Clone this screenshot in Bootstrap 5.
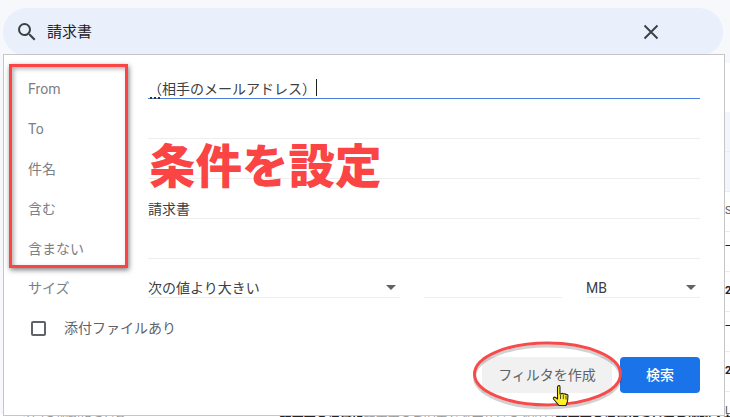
<!DOCTYPE html>
<html lang="ja">
<head>
  <meta charset="UTF-8">
  <meta name="viewport" content="width=device-width, initial-scale=1">
  <title>検索フィルタ</title>
  <link href="https://cdn.jsdelivr.net/npm/bootstrap@5.3.3/dist/css/bootstrap.min.css" rel="stylesheet">
  <style>
    html, body { height: 417px; overflow: hidden; }
    body {
      background-color: #f6f8fc;
      font-family: "Roboto", "Noto Sans CJK JP", sans-serif;
      font-size: 14px;
      color: #5f6368;
      position: relative;
    }
    .search-top { padding: 8px 7px 0 3px; }
    .search-pill {
      height: 48px;
      padding: 0 64px 0 12px;
      background-color: #e9f0fb;
      border-radius: 24px;
      font-size: 15px;
      color: #202124;
    }
    .filter-panel {
      position: absolute;
      left: 3px; top: 54px;
      width: 722px; height: 362px;
      background-color: #fff;
      border: 1px solid #c6c6c6;
      padding: 4.7px 24px 0 24px;
    }
    .form-line { height: 39.8px; }
    .form-label-col { width: 120px; flex-shrink: 0; color: #7b8085; line-height: 20px; }
    .form-field {
      height: 39.8px;
      border-bottom: 1px solid #eeeeee;
      color: #3c4043;
      line-height: 18px;
      position: relative;
    }
    .form-field.active-field { border-bottom-color: #4a80d9; }
    .caret-bar { width: 1px; height: 17px; background-color: #202124; margin-bottom: 2px; }
    .ime-dots { position: absolute; left: 2px; bottom: -1px; width: 10px; border-bottom: 2px dotted #333; }
    .size-arrow { width: 0; height: 0; border-left: 5px solid transparent; border-right: 5px solid transparent; border-top: 5px solid #5f6368; margin-right: 4px; margin-bottom: 7px; }
    .size-number { width: 138px; }
    .size-unit { width: 114px; }
    .tick-box { width: 15px; height: 15px; border: 2px solid #5f6368; border-radius: 2px; }
    .filter-check { margin: 20px 0 0 3px; gap: 18px; }
    .filter-actions { margin-top: 18px; gap: 8px; }
    .btn-make-filter, .btn-make-filter:hover {
      width: 130px; height: 36px; padding: 0;
      background-color: #f1f1f1; border: 0; border-radius: 0;
      color: #5f6368; font-size: 14px;
    }
    .btn-run-search, .btn-run-search:hover {
      width: 80px; height: 36px; padding: 0;
      background-color: #1a73e8; border: 0; border-radius: 4px;
      color: #fff; font-size: 14px; font-weight: 500;
    }
    .red-frame {
      position: absolute;
      left: 9px; top: 64px;
      width: 119px; height: 204px;
      border: 3px solid #fb4444;
      box-shadow: 1px 2px 5px rgba(0,0,0,.5), inset 2px 2px 4px rgba(0,0,0,.3);
    }
    .red-title {
      position: absolute;
      left: 149px; top: 135px;
      font-family: "Noto Sans CJK JP", sans-serif;
      font-size: 46.5px; font-weight: 900; line-height: 56px;
      color: #fb4444;
      white-space: nowrap;
    }
    .red-ellipse { position: absolute; left: 470px; top: 339px; }
    .hand-cursor { position: absolute; left: 552px; top: 384px; }
    .edge-strip {
      position: absolute; left: 725px; top: 63px; width: 5px; height: 354px;
      background-color: #fff; overflow: hidden;
    }
    .edge-top { height: 49px; }
    .edge-cell {
      height: 40px; border-bottom: 1px solid #ececec; padding-top: 12px;
      font-size: 11px; line-height: 14px; color: #555; white-space: nowrap;
    }
    .edge-cell.first-cell { background-color: #f2f6fc; }
    .edge-cell.raised-cell { padding-top: 8px; color: #222; }
    .edge-cell.strong-cell { color: #222; font-weight: 700; }
    .under-strip {
      position: absolute; left: 0; top: 414px; width: 100%; height: 3px;
      overflow: hidden; background-color: #fff; padding-left: 20px;
      font-size: 12px; line-height: 14px; color: #999; white-space: nowrap;
    }
    .under-strip b { color: #222; }
    .under-strip .under-gap { display: inline-block; width: 152px; }
  </style>
</head>
<body>

  <div class="search-top">
    <div class="search-pill d-flex align-items-center justify-content-between">
      <div class="d-flex align-items-center">
        <svg width="24" height="24" viewBox="0 0 24 24" fill="#3c4043"><path d="M15.5 14h-.79l-.28-.27A6.47 6.47 0 0 0 16 9.5 6.5 6.5 0 1 0 9.5 16c1.61 0 3.09-.59 4.23-1.57l.27.28v.79l5 4.99L20.49 19l-4.99-5zm-6 0C7.01 14 5 11.99 5 9.5S7.01 5 9.5 5 14 7.01 14 9.5 11.99 14 9.5 14z"/></svg>
        <span class="ms-2">請求書</span>
      </div>
      <svg width="16" height="16" viewBox="0 0 16 16" fill="none" stroke="#3c4043" stroke-width="1.9"><path d="M1.5 1.5l13 13M14.5 1.5l-13 13"/></svg>
    </div>
  </div>

  <!-- right edge of the table behind the panel -->
  <div class="edge-strip">
    <div class="edge-top"></div>
    <div class="edge-cell first-cell"></div>
    <div class="edge-cell first-cell"></div>
    <div class="edge-cell">Si</div>
    <div class="edge-cell raised-cell">一</div>
    <div class="edge-cell strong-cell">2</div>
    <div class="edge-cell raised-cell">一</div>
    <div class="edge-cell strong-cell">2</div>
    <div class="edge-cell">L</div>
  </div>
  <div class="under-strip">予定の確認について<span class="under-gap"></span><b>請求書の送付に</b>請求書のご案内とお支払いのお願い<b>請求書の送付についてご確認ください</b></div>

  <div class="filter-panel">
    <div class="form-line d-flex align-items-end">
      <div class="form-label-col">From</div>
      <div class="form-field active-field flex-grow-1 d-flex align-items-end">
        <span>（相手のメールアドレス）</span><span class="caret-bar"></span><span class="ime-dots"></span>
      </div>
    </div>
    <div class="form-line d-flex align-items-end">
      <div class="form-label-col">To</div>
      <div class="form-field flex-grow-1"></div>
    </div>
    <div class="form-line d-flex align-items-end">
      <div class="form-label-col">件名</div>
      <div class="form-field flex-grow-1"></div>
    </div>
    <div class="form-line d-flex align-items-end">
      <div class="form-label-col">含む</div>
      <div class="form-field flex-grow-1 d-flex align-items-end"><span>請求書</span></div>
    </div>
    <div class="form-line d-flex align-items-end">
      <div class="form-label-col">含まない</div>
      <div class="form-field flex-grow-1"></div>
    </div>
    <div class="form-line d-flex align-items-end">
      <div class="form-label-col">サイズ</div>
      <div class="flex-grow-1 d-flex gap-4">
        <div class="form-field d-flex align-items-end justify-content-between flex-grow-1"><span>次の値より大きい</span><span class="size-arrow"></span></div>
        <div class="form-field size-number flex-shrink-0"></div>
        <div class="form-field size-unit d-flex align-items-end justify-content-between flex-shrink-0"><span>MB</span><span class="size-arrow"></span></div>
      </div>
    </div>
    <div class="filter-check d-flex align-items-center">
      <span class="tick-box"></span>
      <span>添付ファイルあり</span>
    </div>
    <div class="filter-actions d-flex justify-content-end">
      <button type="button" class="btn btn-make-filter">フィルタを作成</button>
      <button type="button" class="btn btn-run-search">検索</button>
    </div>
  </div>

  <!-- annotations -->
  <div class="red-frame"></div>
  <div class="red-title">条件を設定</div>
  <svg class="red-ellipse" width="156" height="72" viewBox="0 0 156 72">
    <ellipse cx="77.5" cy="38" rx="73" ry="31" fill="none" stroke="#000" stroke-opacity=".18" stroke-width="3"/>
    <ellipse cx="77.5" cy="35" rx="73" ry="31" fill="none" stroke="#f84a4a" stroke-width="3"/>
  </svg>
  <svg class="hand-cursor" width="18" height="24" viewBox="0 0 18 24">
    <path d="M6 2c1-1 2-.5 2 1v7l1 0c1-1 2-.5 2.5 0 1-.5 2 0 2.2.5 1-.5 2 0 2.3 1l-.5 6-1.5 4H7L1.5 15C1 14 2 12.5 3.5 13.500L5.5 15V3z" fill="#fff02a" stroke="#222" stroke-width="1.1" stroke-linejoin="round"/>
    <path d="M8.5 11v4M11.3 11v4M14 11.5v4" stroke="#222" stroke-width=".8" fill="none"/>
  </svg>

  <script src="https://cdn.jsdelivr.net/npm/bootstrap@5.3.3/dist/js/bootstrap.bundle.min.js"></script>
</body>
</html>
